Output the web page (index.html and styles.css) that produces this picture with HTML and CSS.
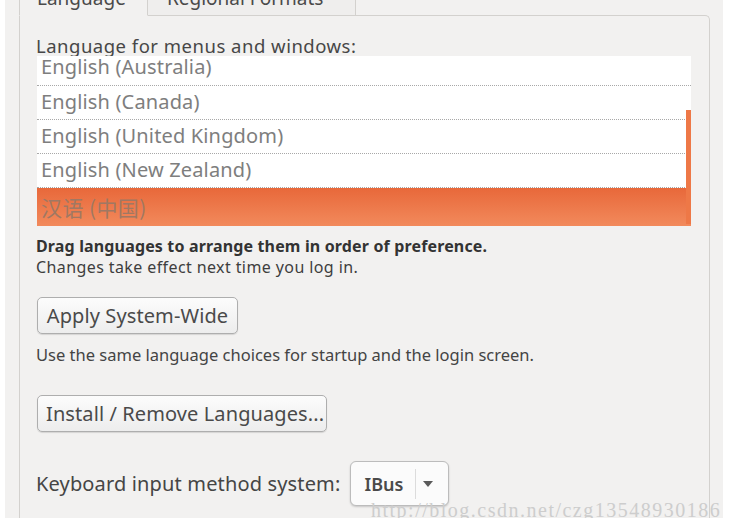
FILE: index.html
```html
<!DOCTYPE html>
<html>
<head>
<meta charset="utf-8">
<link rel="stylesheet" href="styles.css">
</head>
<body>
<div class="window">
  <div class="tabs">
    <div class="tab active"><span>Language</span></div>
    <div class="tab"><span>Regional Formats</span></div>
  </div>
  <div class="panel">
    <div class="label">Language for menus and windows:</div>
    <div class="list">
      <div class="row first"><span>English (Australia)</span></div>
      <div class="row">English (Canada)</div>
      <div class="row">English (United Kingdom)</div>
      <div class="row">English (New Zealand)</div>
      <div class="row selected">汉语 (中国)</div>
      <div class="drop-indicator"></div>
    </div>
    <p class="hint"><b>Drag languages to arrange them in order of preference.</b><br>Changes take effect next time you log in.</p>
    <button class="btn btn-apply">Apply System-Wide</button>
    <p class="desc">Use the same language choices for startup and the login screen.</p>
    <button class="btn btn-install">Install / Remove Languages...</button>
    <div class="kb-row">
      <span class="kb-label">Keyboard input method system:</span>
      <div class="combo">
        <span class="combo-text">IBus</span>
        <i class="combo-sep"></i>
        <svg class="combo-arrow" width="10" height="6" viewBox="0 0 10 6"><path d="M0 0 H10 L5 6 Z" fill="#5a5a5a"/></svg>
      </div>
    </div>
  </div>
  <div class="watermark">http://blog.csdn.net/czg13548930186</div>
</div>
</body>
</html>
```
FILE: styles.css
```css
* { box-sizing: border-box; }
body {
  margin: 0;
  background: #ffffff;
  font-family: "Noto Sans", "Open Sans", sans-serif;
  color: #3c3c3c;
}
.window {
  position: relative;
  margin: 4px 0 0 5px;
  width: 718px;
  height: 518px;
  background: #f2f1f0;
}
.tabs {
  display: flex;
  margin: -4px 0 -1px 14px;
  height: 16px;
}
.tab {
  position: relative;
  height: 16px;
  border: 1px solid #d3d1ce;
  border-top: none;
  background: #f2f1f0;
  font-size: 19px;
  color: #4a4a4a;
  overflow: hidden;
}
.tab span {
  display: block;
  line-height: 0;
  margin-top: -2px;
  white-space: nowrap;
}
.tab.active {
  width: 129px;
  padding-left: 17px;
  border-bottom: 1px solid #f2f1f0;
  z-index: 1;
}
.tab:not(.active) {
  width: 208px;
  padding-left: 19px;
  border-left: none;
  background: #efeeed;
}
.panel {
  margin-left: 14px;
  width: 691px;
  height: 507px;
  border: 1px solid #d3d1ce;
  border-bottom: none;
  border-radius: 0 5px 0 0;
  padding: 0 17px 0 16px;
}
.label {
  margin-top: 20px;
  font-size: 18.5px;
  line-height: 19px;
  letter-spacing: 0.5px;
  color: #474747;
  white-space: nowrap;
}
.list {
  position: relative;
  margin: 1px 0 0 1px;
  width: 654px;
  height: 168px;
  background: #ffffff;
  font-size: 20px;
  letter-spacing: 0.15px;
  color: #7e7e7e;
}
.row {
  height: 34px;
  line-height: 32px;
  padding-left: 4px;
  border-bottom: 1px dotted #a8a8a8;
  white-space: nowrap;
}
.row.first {
  height: 30px;
  line-height: 22px;
}
.row.selected {
  height: 38px;
  line-height: 38px;
  border-bottom: none;
  background: linear-gradient(#e8683a, #f28a5c);
  color: #a07863;
  font-family: "Noto Sans CJK SC", "Noto Sans", sans-serif;
  font-size: 21px;
  letter-spacing: 0.4px;
}
.drop-indicator {
  position: absolute;
  right: 0;
  top: 54px;
  bottom: 0;
  width: 5px;
  background: #ee7847;
}
.hint {
  margin: 12px 0 0;
  font-size: 16px;
  line-height: 21px;
  letter-spacing: 0.4px;
  color: #3e3e3e;
  white-space: nowrap;
}
.hint b { color: #333; letter-spacing: 0.15px; }
.btn {
  display: block;
  height: 37px;
  padding: 0 8px;
  border: 1px solid #aeaeae;
  border-radius: 5px;
  background: linear-gradient(#fcfcfc, #ededed);
  box-shadow: 0 1px 1px rgba(0,0,0,0.12);
  font-family: inherit;
  font-size: 20px;
  letter-spacing: 0.1px;
  color: #4a4a4a;
  margin-left: 1px;
  white-space: nowrap;
}
.btn-apply { margin-top: 19px; width: 201px; }
.desc {
  margin: 11px 0 0;
  font-size: 16.5px;
  line-height: 20px;
  color: #444;
  white-space: nowrap;
}
.btn-install { margin-top: 30px; width: 290px; }
.kb-row {
  display: flex;
  align-items: center;
  gap: 10px;
  margin-top: 29px;
}
.kb-label {
  font-size: 20px;
  letter-spacing: 0.15px;
  color: #454545;
  white-space: nowrap;
}
.combo {
  display: flex;
  align-items: center;
  width: 99px;
  height: 45px;
  border: 1px solid #bcbcbc;
  border-radius: 6px;
  background: #fbfbfb;
  box-shadow: 0 1px 2px rgba(0,0,0,0.18);
  padding-left: 13px;
}
.combo-text {
  font-size: 18px;
  font-weight: 600;
  color: #4a4a4a;
  width: 51px;
}
.combo-sep {
  width: 1px;
  height: 30px;
  background: #dcdcdc;
}
.combo-arrow { margin-left: 7px; }
.watermark {
  position: absolute;
  left: 366px;
  top: 500px;
  font-family: "Liberation Serif", serif;
  font-size: 20px;
  line-height: 20px;
  letter-spacing: 1.5px;
  color: #cdcdcd;
  white-space: nowrap;
}
```
